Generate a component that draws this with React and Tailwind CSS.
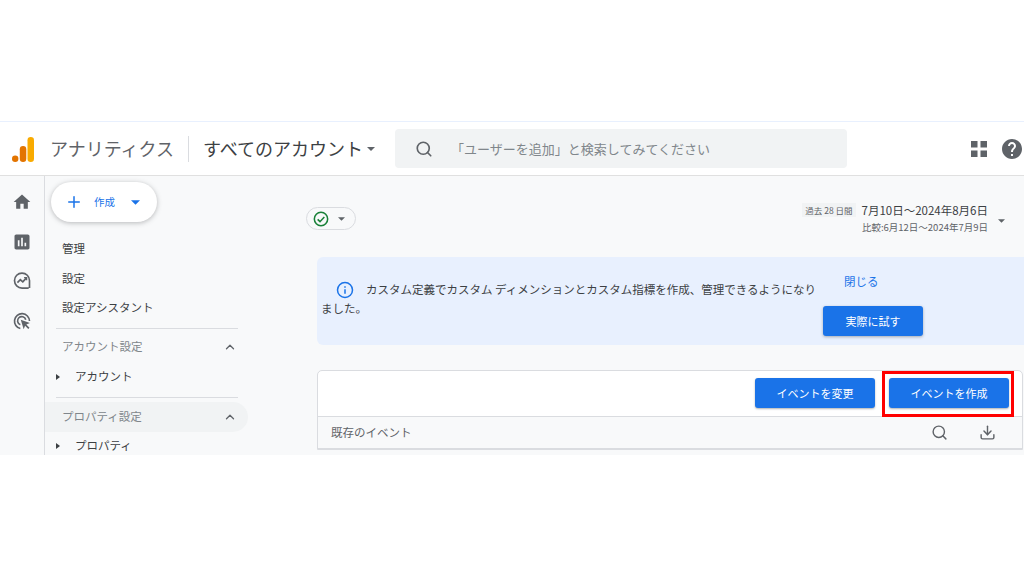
import React from 'react';
import { ChevronUp, Download, Plus, Search } from 'lucide-react';

const font = { fontFamily: '"Noto Sans CJK JP", "Liberation Sans", sans-serif' };

function Caret({ className }) {
  return (
    <svg viewBox="0 0 10 5" className={className} fill="currentColor">
      <path d="M0 0h10L5 5z" />
    </svg>
  );
}

function SideCaret() {
  return (
    <svg viewBox="0 0 4 6" className="w-[4px] h-[6px] text-[#3c4043]" fill="currentColor">
      <path d="M0 0l4 3-4 3z" />
    </svg>
  );
}

function Logo() {
  return (
    <svg viewBox="0 0 22 25" className="w-[22px] h-[25px]">
      <rect x="15.5" y="0" width="6.5" height="25" rx="3.2" fill="#f9ab00" />
      <rect x="7.8" y="9" width="6.5" height="16" rx="3.2" fill="#e37400" />
      <circle cx="3.2" cy="21.7" r="3.2" fill="#e37400" />
    </svg>
  );
}

function RailIcon({ children }) {
  return (
    <svg viewBox="0 0 24 24" className="w-[20px] h-[20px] text-[#5f6368]" fill="currentColor">
      {children}
    </svg>
  );
}

function Rail() {
  return (
    <div className="w-[45px] shrink-0 border-r border-[#dadce0] flex flex-col items-center pt-[16px] gap-[19.5px] pr-[1px]">
      <RailIcon>
        <path d="M10 20v-6h4v6h5v-8h3L12 3 2 12h3v8z" />
      </RailIcon>
      <RailIcon>
        <path d="M19 3H5c-1.1 0-2 .9-2 2v14c0 1.1.9 2 2 2h14c1.1 0 2-.9 2-2V5c0-1.1-.9-2-2-2zM9 17H7v-7h2v7zm4 0h-2V7h2v10zm4 0h-2v-4h2v4z" />
      </RailIcon>
      <RailIcon>
        <g fill="none" stroke="currentColor" strokeWidth="2">
          <path d="M20 20.5H12a9 9 0 1 1 9-9v9" />
          <path d="M6.5 14l3.5-3.5 3 2.5 4-4.5" />
          <path d="M14.5 8h3v3" strokeWidth="1.6" />
        </g>
      </RailIcon>
      <RailIcon>
        <g fill="none" stroke="currentColor" strokeWidth="2">
          <path d="M10 21a9 9 0 1 1 11-9" />
          <path d="M10 16.5a5 5 0 1 1 6.500-6" />
        </g>
        <path d="M10.500 10.500l11 4-4.300 1.700 3.800 3.800-1.500 1.500-3.800-3.800-1.700 4.300z" />
      </RailIcon>
    </div>
  );
}

function NavPanel() {
  return (
    <div className="w-[203px] shrink-0 pt-[6px] text-[11.5px] text-[#3c4043]">
      <div className="ml-[6px] w-[106px] h-[40px] rounded-full bg-white shadow-[0_1px_5px_rgba(60,64,67,0.35)] flex items-center pl-[14px] text-[#1a73e8]">
        <Plus className="w-[18px] h-[18px]" strokeWidth={2} />
        <span className="ml-[11px] text-[10.5px]">作成</span>
        <Caret className="w-[9px] h-[5px] ml-[16px]" />
      </div>
      <div className="mt-[12px] pl-[17px] flex flex-col">
        <div className="h-[30px] flex items-center">管理</div>
        <div className="h-[29px] flex items-center">設定</div>
        <div className="h-[30px] flex items-center">設定アシスタント</div>
      </div>
      <div className="ml-[11px] w-[182px] border-t border-[#dadce0] mt-[5px]" />
      <div className="pl-[17px] pr-[11px] h-[36px] flex items-center justify-between text-[#80868b]">
        <span>アカウント設定</span>
        <ChevronUp className="w-[14px] h-[14px] text-[#5f6368]" strokeWidth={2.2} />
      </div>
      <div className="h-[24px] pl-[11px] flex items-center">
        <SideCaret />
        <span className="ml-[15px]">アカウント</span>
      </div>
      <div className="ml-[11px] w-[182px] border-t border-[#dadce0] mt-[8px] mb-[4px]" />
      <div className="pl-[17px] pr-[11px] h-[30px] rounded-r-full bg-[#f1f3f4] flex items-center justify-between text-[#80868b]">
        <span>プロパティ設定</span>
        <ChevronUp className="w-[14px] h-[14px] text-[#5f6368]" strokeWidth={2.2} />
      </div>
      <div className="h-[28px] pl-[11px] flex items-center">
        <SideCaret />
        <span className="ml-[15px]">プロパティ</span>
      </div>
    </div>
  );
}

function Toolbar() {
  return (
    <div className="h-[81px] flex items-start">
      <div className="ml-[58px] mt-[31px] w-[50px] h-[23px] rounded-full border border-[#dadce0] flex items-center pl-[6px]">
        <svg viewBox="0 0 24 24" className="w-[16px] h-[16px] text-[#188038]" fill="none" stroke="currentColor" strokeWidth="2.300">
          <circle cx="12" cy="12" r="10" />
          <path d="M7 12.500l3.500 3.500 6.500-7" />
        </svg>
        <Caret className="w-[7px] h-[4px] ml-[9px] text-[#5f6368]" />
      </div>
      <div className="ml-auto mt-[27px] flex items-center">
        <div className="flex flex-col items-end">
          <div className="flex items-center">
            <span className="bg-[#f1f3f4] text-[#5f6368] text-[8.5px] h-[14px] px-[3px] flex items-center mr-[6px]">過去 28 日間</span>
            <span className="text-[11.5px] text-[#3c4043] leading-[14px]">7月10日〜2024年8月6日</span>
          </div>
          <span className="text-[9.5px] text-[#5f6368] mt-[3px] leading-[14px]">比較:6月12日〜2024年7月9日</span>
        </div>
        <Caret className="w-[7px] h-[4px] ml-[10px] mr-[19px] mt-[4px] text-[#5f6368]" />
      </div>
    </div>
  );
}

function Banner() {
  return (
    <div className="ml-[69px] h-[88px] rounded-l-[6px] bg-[#e8f0fe] flex">
      <p className="ml-[4px] w-[499px] mt-[23px] text-[11.5px] leading-[19px] text-[#3c4043]">
        <svg viewBox="0 0 24 24" className="inline-block w-[18px] h-[18px] ml-[15px] mr-[12px] align-[-5px] text-[#1a73e8]" fill="none" stroke="currentColor" strokeWidth="2">
          <circle cx="12" cy="12" r="10" />
          <path d="M12 11v6M12 7v2" />
        </svg>
        カスタム定義でカスタム ディメンションとカスタム指標を作成、管理できるようになりました。
      </p>
      <div className="ml-[3px] w-[100px] pt-[15px] flex flex-col">
        <span className="ml-[21px] text-[11.5px] leading-[18px] text-[#1a73e8]">閉じる</span>
        <button className="mt-[16px] h-[30px] rounded-[3px] bg-[#1a73e8] text-white text-[11px] shadow-[0_1px_3px_rgba(60,64,67,0.4)]">実際に試す</button>
      </div>
    </div>
  );
}

function EventsCard() {
  return (
    <div className="ml-[69px] mr-[1px] mt-[25px] border border-[#dadce0] rounded-t-[5px] bg-white">
      <div className="relative h-[46px] pt-[7px] pr-[13px] flex justify-end gap-[14px] border-b border-[#dadce0]">
        <button className="w-[120px] h-[30px] rounded-[3px] bg-[#1a73e8] text-white text-[11px] shadow-[0_1px_2px_rgba(60,64,67,0.4)]">イベントを変更</button>
        <button className="w-[120px] h-[30px] rounded-[3px] bg-[#1a73e8] text-white text-[11px] shadow-[0_1px_2px_rgba(60,64,67,0.4)]">イベントを作成</button>
        <div className="absolute right-[8px] top-[0px] w-[132px] h-[46px] border-[3px] border-[#ff0000]" />
      </div>
      <div className="h-[32px] bg-[#f8f9fa] border-b border-[#dadce0] flex items-center pl-[13px] pr-[26px] text-[11.5px] text-[#5f6368]">
        <span>既存のイベント</span>
        <Search className="ml-auto w-[17px] h-[17px]" strokeWidth={2} />
        <Download className="ml-[31px] w-[17px] h-[17px]" strokeWidth={2} />
      </div>
    </div>
  );
}

export default function App() {
  return (
    <div style={font} className="w-[1024px] h-[576px] bg-white overflow-hidden pt-[121px]">
      <div className="h-[55px] border-t border-[#e8f0fe] border-b border-b-[#e0e0e0] flex items-center overflow-hidden relative">
        <div className="ml-[12px] mt-[1px]"><Logo /></div>
        <span className="ml-[16px] text-[18px] text-[#5f6368] whitespace-nowrap">アナリティクス</span>
        <div className="ml-[14px] h-[26px] border-l border-[#dadce0]" />
        <span className="ml-[14px] text-[18px] text-[#3c4043] whitespace-nowrap">すべてのアカウント</span>
        <Caret className="ml-[4px] w-[8px] h-[4px] text-[#5f6368]" />
        <div className="ml-[20px] w-[453px] h-[39px] rounded-[4px] bg-[#f1f3f4] flex items-center">
          <Search className="ml-[20px] w-[18px] h-[18px] text-[#5f6368]" strokeWidth={2.2} />
          <span className="ml-[18px] text-[13px] text-[#80868b] whitespace-nowrap">「ユーザーを追加」と検索してみてください</span>
        </div>
        <svg viewBox="0 0 16 16" className="ml-[124px] w-[16px] h-[16px] text-[#5f6368] shrink-0" fill="currentColor">
          <path d="M0 0h6.500v6.500H0zM9.500 0H16v6.500H9.500zM0 9.500h6.500V16H0zM9.500 9.500H16V16H9.500z" />
        </svg>
        <svg viewBox="0 0 24 24" className="ml-[13px] w-[24px] h-[24px] text-[#5f6368] shrink-0" fill="currentColor">
          <path d="M12 2C6.480 2 2 6.480 2 12s4.480 10 10 10 10-4.480 10-10S17.520 2 12 2zm1 17h-2v-2h2v2zm2.070-7.750l-.9.920C13.450 12.900 13 13.500 13 15h-2v-.5c0-1.100.450-2.100 1.170-2.830l1.240-1.260c.37-.36.590-.86.590-1.410 0-1.100-.9-2-2-2s-2 .9-2 2H8c0-2.210 1.790-4 4-4s4 1.790 4 4c0 .88-.36 1.680-.93 2.250z" />
        </svg>
      </div>
      <div className="h-[279px] bg-[#f8f9fa] flex overflow-hidden">
        <Rail />
        <NavPanel />
        <div className="flex-1 min-w-0">
          <Toolbar />
          <Banner />
          <EventsCard />
        </div>
      </div>
    </div>
  );
}
